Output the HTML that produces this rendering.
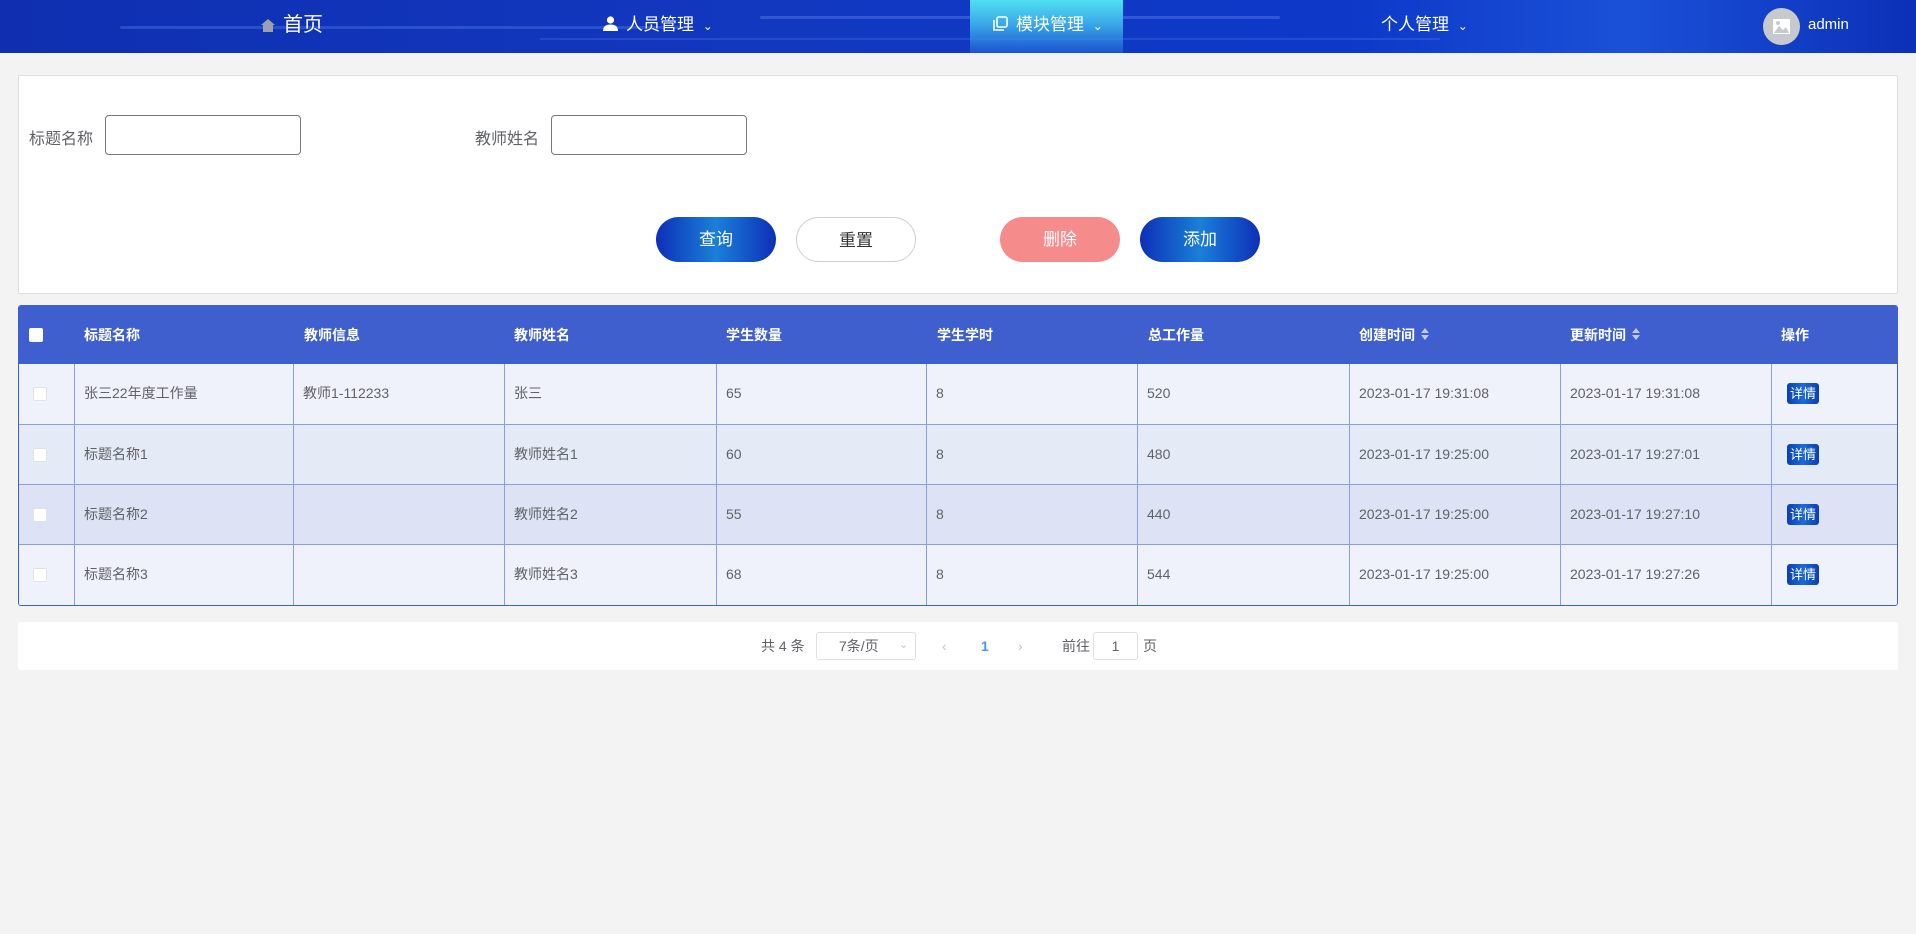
<!DOCTYPE html>
<html><head><meta charset="utf-8"><style>
*{box-sizing:border-box;margin:0;padding:0}
body{width:1916px;height:934px;background:#f3f3f3;font-family:"Liberation Sans","Noto Sans CJK SC",sans-serif;position:relative;overflow:hidden}
.hdr{position:absolute;left:0;top:0;width:1916px;height:53px;background:linear-gradient(90deg,#0f2fb0 0%,#1238c0 40%,#0d38c8 70%,#1a50d8 85%,#0c30b8 100%);overflow:hidden}
.hdr .ln{position:absolute;height:3px;border-radius:2px;background:rgba(120,160,255,.25)}
.nav{position:absolute;top:0;height:53px;line-height:50px;color:#fff;font-size:17px;white-space:nowrap}
.hl{position:absolute;left:970px;top:0;width:153px;height:53px;background:linear-gradient(180deg,#4fe0f0 0%,#3aa8e8 45%,rgba(40,110,220,.5) 100%)}
.av{position:absolute;left:1763px;top:8px;width:37px;height:37px;border-radius:50%;background:#c8c9cc}
.panel{position:absolute;left:18px;top:75px;width:1880px;height:219px;background:#fff;border:1px solid #dcdfe6;border-radius:2px}
.lab{position:absolute;font-size:16px;color:#606266;top:125px}
.inp{position:absolute;top:115px;width:196px;height:40px;border:1px solid #777;border-radius:4px;background:#fff}
.btn{position:absolute;top:217px;width:120px;height:45px;border-radius:23px;color:#fff;font-size:17px;text-align:center;line-height:45px}
.blue{background:linear-gradient(90deg,#0d2fb8 0%,#1a80d8 50%,#0d2fb8 100%)}
.tbl{position:absolute;left:18px;top:305px;width:1880px;height:301px;border:1px solid #3a62c8;border-radius:3px;overflow:hidden;background:#eff2fb}
.th{position:absolute;left:0;top:0;width:1880px;height:58px;background:#3f5fcf}
.th span{position:absolute;top:0;line-height:58px;color:#fff;font-weight:bold;font-size:14px}
.row{position:absolute;left:0;width:1880px;height:60px;border-top:1px solid #8a9fdc}
.cell{position:absolute;top:0;height:60px;line-height:59px;font-size:14px;color:#606266;padding-left:10px}
.vl{position:absolute;top:58px;width:1px;height:243px;background:#8a9fdc}
.cb{position:absolute;left:14px;top:23px;width:14px;height:14px;background:#fff;border:1px solid #e0e3ea;border-radius:2px}
.det{position:absolute;left:16px;top:19px;width:32px;height:21px;border-radius:3px;background:linear-gradient(90deg,#0b3fb0,#1c6ad8,#0b3fb0);color:#fff;font-size:13px;line-height:21px;text-align:center;padding:0}
.pg{position:absolute;left:18px;top:622px;width:1880px;height:48px;background:#fff;border-radius:3px;font-size:14px;color:#606266}
.pg span{position:absolute;top:0;line-height:48px}
.sort{display:inline-block;margin-left:6px;vertical-align:middle;width:8px;height:12px;position:relative;top:-2px}
.sort:before{content:"";position:absolute;left:0;top:0;border:4px solid transparent;border-bottom:5px solid #c0c8ee;border-top:0}
.sort:after{content:"";position:absolute;left:0;top:7px;border:4px solid transparent;border-top:5px solid #c0c8ee;border-bottom:0}
</style></head><body>
<div class="hdr">
<div class="ln" style="left:120px;top:26px;width:560px;background:rgba(100,150,255,.3)"></div>
<div class="ln" style="left:760px;top:16px;width:520px;background:rgba(150,180,255,.25)"></div>
<div class="ln" style="left:540px;top:38px;width:900px;height:2px;background:rgba(120,160,255,.2)"></div>
<div class="hl"></div>
<div class="nav" style="left:261px"><svg width="14" height="13" viewBox="0 0 14 13" style="vertical-align:-1px;margin-right:8px"><path d="M7 0 L14 6 L12 6 L12 13 L2 13 L2 6 L0 6Z" fill="#9aa0ad"/></svg><span style="font-size:20px">首页</span></div>
<div class="nav" style="left:603px"><svg width="15" height="15" viewBox="0 0 15 15" style="vertical-align:-1px;margin-right:8px"><circle cx="7.5" cy="4" r="3.6" fill="#fff"/><path d="M0 15 Q0 8.5 7.5 8.5 Q15 8.5 15 15Z" fill="#fff"/></svg>人员管理 <span style="font-size:12px;margin-left:4px">&#8964;</span></div>
<div class="nav" style="left:993px"><svg width="15" height="15" viewBox="0 0 15 15" style="vertical-align:-1px;margin-right:8px"><rect x="4" y="1" width="10" height="10" rx="1.5" fill="none" stroke="#fff" stroke-width="1.6"/><path d="M1 4 V14 H11" fill="none" stroke="#fff" stroke-width="1.6"/></svg>模块管理 <span style="font-size:12px;margin-left:4px">&#8964;</span></div>
<div class="nav" style="left:1381px">个人管理 <span style="font-size:12px;margin-left:4px">&#8964;</span></div>
<div class="av"><svg width="37" height="37" viewBox="0 0 37 37"><rect x="10" y="11" width="17" height="15" fill="#fff"/><path d="M11 25 L16 18 L20 22 L23 19 L26 25Z" fill="#c8c9cc"/><circle cx="15" cy="15" r="2" fill="#c8c9cc"/></svg></div>
<div class="nav" style="left:1808px;font-size:15px">admin</div>
</div>

<div class="panel"></div>
<div class="lab" style="left:29px">标题名称</div>
<div class="inp" style="left:105px"></div>
<div class="lab" style="left:475px">教师姓名</div>
<div class="inp" style="left:551px"></div>
<div class="btn blue" style="left:656px">查询</div>
<div class="btn" style="left:796px;background:#fff;border:1px solid #d0d0d0;color:#333">重置</div>
<div class="btn" style="left:1000px;background:#f68b8b">删除</div>
<div class="btn blue" style="left:1140px">添加</div>

<div class="tbl">
<div class="th">
<div style="position:absolute;left:10px;top:22px;width:14px;height:14px;background:#fff;border-radius:2px"></div>
<span style="left:65px">标题名称</span><span style="left:285px">教师信息</span><span style="left:495px">教师姓名</span><span style="left:707px">学生数量</span><span style="left:918px">学生学时</span><span style="left:1129px">总工作量</span><span style="left:1340px">创建时间<i class="sort"></i></span><span style="left:1551px">更新时间<i class="sort"></i></span><span style="left:1762px">操作</span>
</div>
<div class="row" style="top:58px;background:#eff2fb;border-top:0">
<div class="cb"></div><div class="cell" style="left:55px">张三22年度工作量</div><div class="cell" style="left:274px">教师1-112233</div><div class="cell" style="left:485px">张三</div><div class="cell" style="left:697px">65</div><div class="cell" style="left:907px">8</div><div class="cell" style="left:1118px">520</div><div class="cell" style="left:1330px">2023-01-17 19:31:08</div><div class="cell" style="left:1541px">2023-01-17 19:31:08</div><div class="cell" style="left:1752px"><div class="det">详情</div></div></div>
<div class="row" style="top:118px;background:#e5eaf7">
<div class="cb"></div><div class="cell" style="left:55px">标题名称1</div><div class="cell" style="left:485px">教师姓名1</div><div class="cell" style="left:697px">60</div><div class="cell" style="left:907px">8</div><div class="cell" style="left:1118px">480</div><div class="cell" style="left:1330px">2023-01-17 19:25:00</div><div class="cell" style="left:1541px">2023-01-17 19:27:01</div><div class="cell" style="left:1752px"><div class="det">详情</div></div></div>
<div class="row" style="top:178px;background:#dde3f5">
<div class="cb"></div><div class="cell" style="left:55px">标题名称2</div><div class="cell" style="left:485px">教师姓名2</div><div class="cell" style="left:697px">55</div><div class="cell" style="left:907px">8</div><div class="cell" style="left:1118px">440</div><div class="cell" style="left:1330px">2023-01-17 19:25:00</div><div class="cell" style="left:1541px">2023-01-17 19:27:10</div><div class="cell" style="left:1752px"><div class="det">详情</div></div></div>
<div class="row" style="top:238px;background:#eff2fb;height:63px">
<div class="cb"></div><div class="cell" style="left:55px">标题名称3</div><div class="cell" style="left:485px">教师姓名3</div><div class="cell" style="left:697px">68</div><div class="cell" style="left:907px">8</div><div class="cell" style="left:1118px">544</div><div class="cell" style="left:1330px">2023-01-17 19:25:00</div><div class="cell" style="left:1541px">2023-01-17 19:27:26</div><div class="cell" style="left:1752px"><div class="det">详情</div></div></div>
<div class="vl" style="left:55px"></div><div class="vl" style="left:274px"></div><div class="vl" style="left:485px"></div><div class="vl" style="left:697px"></div><div class="vl" style="left:907px"></div><div class="vl" style="left:1118px"></div><div class="vl" style="left:1330px"></div><div class="vl" style="left:1541px"></div><div class="vl" style="left:1752px"></div>
</div>

<div class="pg">
<span style="left:743px">共 4 条</span>
<div style="position:absolute;left:798px;top:10px;width:100px;height:28px;border:1px solid #dcdfe6;border-radius:3px;font-size:14px;line-height:26px;padding-left:22px;color:#606266">7条/页<span style="position:absolute;left:82px;top:0;line-height:24px;color:#c0c4cc;font-size:11px">&#8964;</span></div>
<span style="left:924px;color:#c0c4cc">&lsaquo;</span>
<span style="left:963px;color:#409eff;font-weight:bold">1</span>
<span style="left:1000px;color:#c0c4cc">&rsaquo;</span>
<span style="left:1044px">前往</span>
<div style="position:absolute;left:1075px;top:10px;width:45px;height:28px;border:1px solid #dcdfe6;border-radius:3px;text-align:center;line-height:26px">1</div>
<span style="left:1125px">页</span>
</div>
</body></html>
